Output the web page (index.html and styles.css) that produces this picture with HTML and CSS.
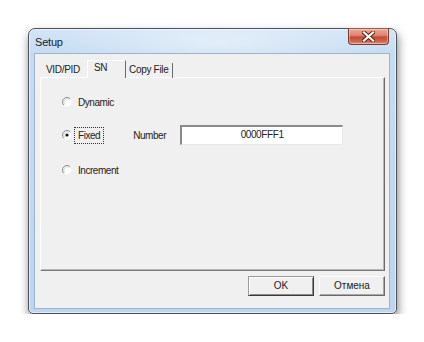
FILE: index.html
```html
<!DOCTYPE html>
<html>
<head>
<meta charset="utf-8">
<link rel="stylesheet" href="styles.css">
</head>
<body>
<div class="window">
  <div class="titlebar">
    <span class="title">Setup</span>
    <div class="close">
      <svg width="13" height="11" viewBox="0 0 13 11"><path d="M2 1.5 L11 9.5 M11 1.5 L2 9.5" stroke="#5a1c12" stroke-width="4" stroke-linecap="square"/><path d="M2 1.5 L11 9.5 M11 1.5 L2 9.5" stroke="#ffffff" stroke-width="2.2" stroke-linecap="square"/></svg>
    </div>
  </div>
  <div class="client">
    <div class="tabs">
      <div class="tab t1">VID/PID</div>
      <div class="tab t2 active">SN</div>
      <div class="tab t3">Copy File</div>
    </div>
    <div class="panel">
      <div class="row r1">
        <span class="radio"><svg width="10" height="10" viewBox="0 0 10 10"><circle cx="5" cy="5" r="4.5" fill="#fff"/><path d="M8.2 1.8 A4.5 4.5 0 0 0 1.8 8.2" fill="none" stroke="#8c8c8c" stroke-width="1"/><path d="M7.4 2.6 A3.4 3.4 0 0 0 2.6 7.4" fill="none" stroke="#c8c8c8" stroke-width="0.8"/></svg></span>
        <span class="label">Dynamic</span>
      </div>
      <div class="row r2">
        <span class="radio"><svg width="10" height="10" viewBox="0 0 10 10"><circle cx="5" cy="5" r="4.5" fill="#fff"/><path d="M8.2 1.8 A4.5 4.5 0 0 0 1.8 8.2" fill="none" stroke="#8c8c8c" stroke-width="1"/><path d="M7.4 2.6 A3.4 3.4 0 0 0 2.6 7.4" fill="none" stroke="#c8c8c8" stroke-width="0.8"/><circle cx="5" cy="5" r="1.6" fill="#111"/></svg></span>
        <span class="label focus">Fixed</span>
        <span class="num-label">Number</span>
        <div class="input">0000FFF1</div>
      </div>
      <div class="row r3">
        <span class="radio"><svg width="10" height="10" viewBox="0 0 10 10"><circle cx="5" cy="5" r="4.5" fill="#fff"/><path d="M8.2 1.8 A4.5 4.5 0 0 0 1.8 8.2" fill="none" stroke="#8c8c8c" stroke-width="1"/><path d="M7.4 2.6 A3.4 3.4 0 0 0 2.6 7.4" fill="none" stroke="#c8c8c8" stroke-width="0.8"/></svg></span>
        <span class="label">Increment</span>
      </div>
    </div>
    <div class="buttons">
      <div class="btn default">OK</div>
      <div class="btn">Отмена</div>
    </div>
  </div>
</div>
</body>
</html>
```
FILE: styles.css
```css
* { box-sizing: border-box; }
html, body { margin: 0; padding: 0; background: #fff; }
body {
  font-family: "Liberation Sans", Arial, sans-serif;
  font-size: 10px;
  color: #222;
  padding: 28px 0 0 28px;
}
.window {
  width: 369px;
  height: 286px;
  border: 1px solid #4e5156;
  border-radius: 7px 7px 5px 5px;
  background: linear-gradient(180deg, #d3e5f7 0px, #c6dcf2 24px, #bdd5ef 100%);
  box-shadow: 1px 5px 10px rgba(0,0,0,0.5), inset 0 0 0 1px rgba(255,255,255,0.55);
  display: flex;
  flex-direction: column;
}
.titlebar {
  height: 24px;
  display: flex;
  align-items: center;
  padding-left: 6px;
  background: radial-gradient(ellipse 170px 30px at 190px 14px, rgba(255,255,255,0.45), rgba(255,255,255,0) 100%);
  border-radius: 6px 6px 0 0;
}
.title {
  font-size: 11px;
  color: #1a1a1a;
  letter-spacing: -0.2px;
  margin-top: 1px;
}
.close {
  margin-left: auto;
  margin-right: 7px;
  align-self: flex-start;
  margin-top: -1px;
  width: 41px;
  height: 17px;
  border: 1px solid #7a3a30;
  border-top-color: #9a5a50;
  border-radius: 0 0 4px 4px;
  background: linear-gradient(180deg, #e8a798 0%, #dd8a76 40%, #c64a34 55%, #cf6a52 85%, #df9a84 100%);
  box-shadow: inset 0 0 0 1px rgba(255,255,255,0.35);
  display: flex;
  align-items: center;
  justify-content: center;
}
.close svg { display: block; }
.client {
  margin: 0 6px 0 5px;
  height: 256px;
  border: 1px solid #9fb3cb;
  background: #f0f0f0;
  display: flex;
  flex-direction: column;
  padding: 6px 4px 0 5px;
}
.tabs {
  display: flex;
  align-items: flex-end;
  height: 18px;
  position: relative;
  z-index: 2;
  margin-bottom: -1px;
}
.tab {
  height: 15px;
  line-height: 14px;
  letter-spacing: -0.3px;
  border-right: 1px solid #8a8a8a;
}
.t1 { width: 47px; padding-left: 6px; border-right: none; }
.t2 {
  width: 39px;
  height: 18px;
  line-height: 14px;
  padding-left: 6px;
  background: #f0f0f0;
  border-left: 1px solid #fff;
  border-top: 1px solid #fff;
  border-right: 1px solid #6a6a6a;
}
.t3 { width: 47px; padding-left: 3px; border-right: 1px solid #6a6a6a; }
.panel {
  height: 194px;
  border-top: 1px solid #fff;
  border-left: 1px solid #fff;
  border-right: 1px solid #6a6a6a;
  border-bottom: 1px solid #7a7a7a;
  box-shadow: inset -1px -1px 0 #b8b8b8;
  padding: 17px 0 0 21px;
  display: flex;
  flex-direction: column;
}
.row {
  display: flex;
  align-items: center;
  letter-spacing: -0.45px;
}
.r1 { height: 14px; }
.r2 { height: 20px; margin-top: 16px; }
.r3 { height: 14px; margin-top: 18px; }
.radio { width: 10px; height: 10px; display: block; margin-right: 5px; }
.radio svg { display: block; }
.label { padding: 0 1px; }
.focus {
  outline: 1px dotted #333;
  outline-offset: 2px;
}
.num-label { margin-left: 32px; }
.input {
  margin-left: 14px;
  width: 163px;
  height: 20px;
  background: #fff;
  border-style: solid;
  border-width: 2px 1px 1px 2px;
  border-color: #8a8a8a #e8e8e8 #e8e8e8 #8a8a8a;
  text-align: center;
  line-height: 16px;
  letter-spacing: -0.4px;
}
.buttons {
  display: flex;
  justify-content: flex-end;
  gap: 5px;
  margin-top: 5px;
}
.btn {
  width: 66px;
  height: 20px;
  border: 1px solid;
  border-color: #fdfdfd #6a6a6a #6a6a6a #fdfdfd;
  box-shadow: inset -1px -1px 0 #a8a8a8;
  background: #f0f0f0;
  text-align: center;
  line-height: 17px;
}
.btn.default {
  border-color: #9a9a9a #3a3a3a #3a3a3a #9a9a9a;
  box-shadow: inset 1px 1px 0 #fff, inset -1px -1px 0 #8a8a8a;
}
```
